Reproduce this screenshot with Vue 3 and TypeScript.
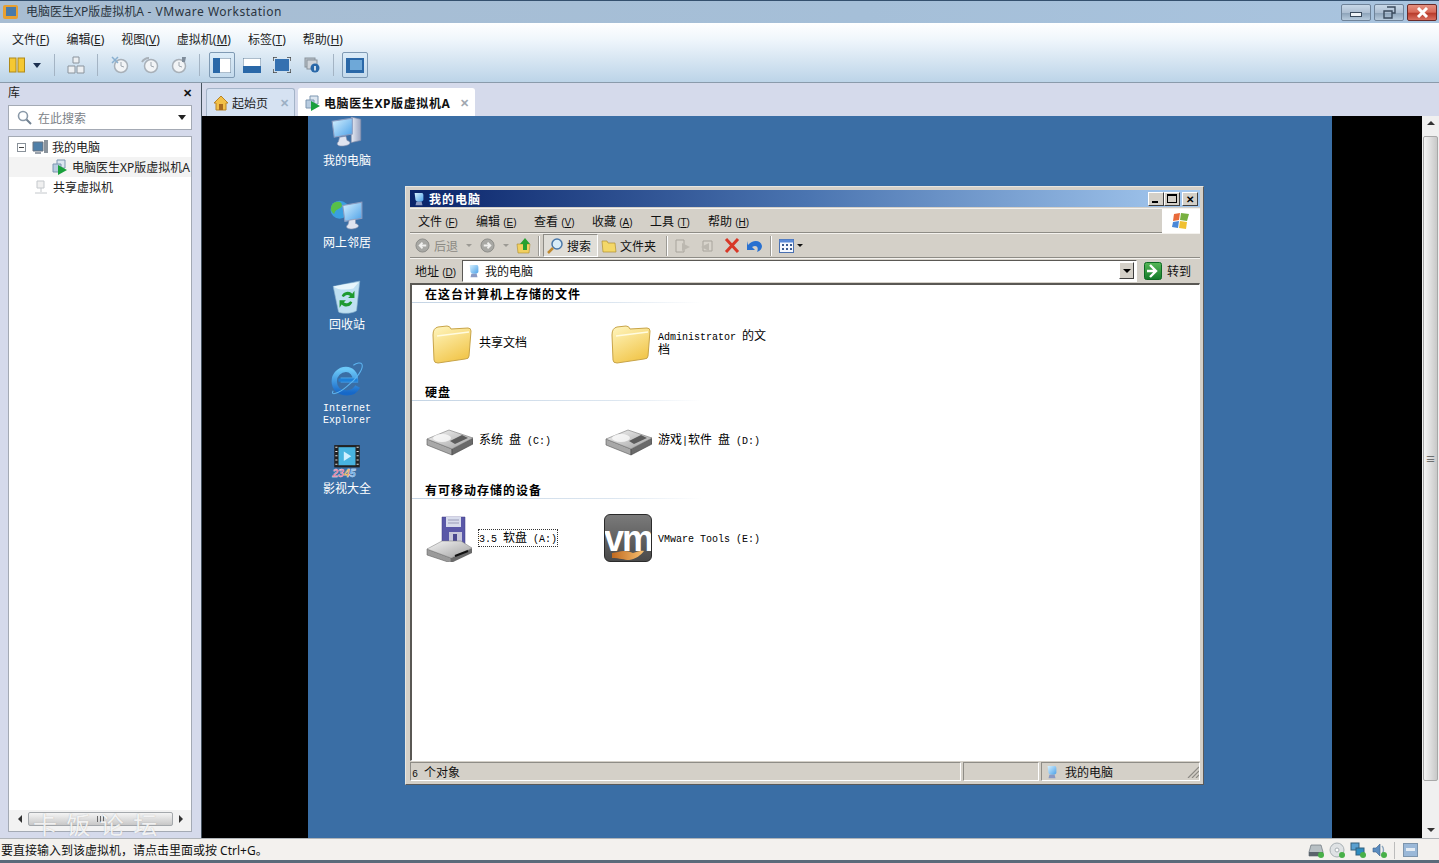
<template>
  <div class="app">
    <svg width="0" height="0" class="defs">
      <defs>
        <linearGradient id="gScreen" x1="0" y1="0" x2="1" y2="1"><stop offset="0" stop-color="#d8f2ff" /><stop offset="1" stop-color="#4aa0e8" /></linearGradient>
        <linearGradient id="gCase" x1="0" y1="0" x2="1" y2="0"><stop offset="0" stop-color="#e8ecf4" /><stop offset="1" stop-color="#9aa4c0" /></linearGradient>
        <linearGradient id="gFolder" x1="0" y1="0" x2="0.5" y2="1"><stop offset="0" stop-color="#fff6c0" /><stop offset="1" stop-color="#f2c850" /></linearGradient>
        <linearGradient id="gDisk" x1="0" y1="0" x2="1" y2="1"><stop offset="0" stop-color="#f4f4f4" /><stop offset="1" stop-color="#a0a0a0" /></linearGradient>
        <linearGradient id="gHand" x1="0" y1="0" x2="1" y2="0"><stop offset="0" stop-color="#c06a20" /><stop offset="1" stop-color="#f8c070" /></linearGradient>
        <linearGradient id="gGreen" x1="0" y1="0" x2="0" y2="1"><stop offset="0" stop-color="#58b858" /><stop offset="1" stop-color="#127a2a" /></linearGradient>
        <linearGradient id="gIe" x1="0" y1="0" x2="0" y2="1"><stop offset="0" stop-color="#6cc8f8" /><stop offset="1" stop-color="#1668c8" /></linearGradient>
      </defs>
      <symbol id="i-mypc" viewBox="0 0 32 32">
        <path d="M20 1 L29 3 V23 L20 25Z" fill="url(#gCase)" stroke="#7f8aa8" stroke-width=".6" />
        <path d="M2 5 L21 2 V17 L4 20Z" fill="url(#gScreen)" stroke="#8a9cc0" />
        <path d="M9 20 L15 19 L16 23 C20 24 20 27 14 28 C8 29 5 27 8 24Z" fill="#dfe4f0" stroke="#8a94b0" stroke-width=".6" />
      </symbol>
      <symbol id="i-net" viewBox="0 0 32 32">
        <circle cx="9" cy="11" r="8.5" fill="#3aa0e0" />
        <path d="M3 5 C8 2 12 4 11 8 C9 11 5 10 4 15 C0 13 0 8 3 5Z" fill="#58c048" />
        <path d="M12 7 L30 4 V19 L14 22Z" fill="url(#gScreen)" stroke="#8a9cc0" />
        <path d="M18 21 L24 20 L24 24 C28 25 28 28 22 29 C16 30 14 27 17 25Z" fill="#dfe4f0" stroke="#8a94b0" stroke-width=".6" />
      </symbol>
      <symbol id="i-bin" viewBox="0 0 32 32">
        <path d="M3 6 L28 1 L25 29 C20 32 11 32 8 30Z" fill="#bfe0f2" stroke="#88b0cc" stroke-width=".6" />
        <path d="M3 6 L14 4 L27 2 L22 8 C14 10 7 9 3 6Z" fill="#e8f6fc" />
        <path d="M11 15 A6 6 0 0 1 21 13 L23 10 L23 17 L17 17 L19 15 A4 4 0 0 0 13 16Z" fill="#1e9a30" />
        <path d="M21 21 A6 6 0 0 1 11 23 L9 26 L9 19 L15 19 L13 21 A4 4 0 0 0 19 20Z" fill="#1e9a30" />
      </symbol>
      <symbol id="i-ie" viewBox="0 0 32 32">
        <path d="M10 17 H24 C24 11 20 7 15 7 C9 7 4 12 4 18 C4 25 9 29 16 29 C20 29 24 27 26 23" fill="none" stroke="url(#gIe)" stroke-width="5" />
        <path d="M8 17 H26" stroke="#1f80d8" stroke-width="3" />
        <path d="M3 27 C0 32 8 30 16 23 C25 16 32 6 30 2 C29 0 25 1 22 3" fill="none" stroke="#5cb4f0" stroke-width="1" />
      </symbol>
      <symbol id="i-folder" viewBox="0 0 48 48">
        <path d="M8 17 Q8 10 13 9 L22 8 Q25 8 26 11 L43 10 Q46 10 46 13 L44 38 Q44 41 40 41 L13 45 Q9 45 9 42Z" fill="url(#gFolder)" stroke="#c8a448" />
        <path d="M12 18 L44 14" stroke="#fffbe0" stroke-width="1.5" />
      </symbol>
      <symbol id="i-hdd" viewBox="0 0 48 48">
        <path d="M2 23 L27 33 V39 L2 29Z" fill="#a8a8a8" stroke="#555" stroke-width=".6" />
        <path d="M27 33 L48 22 V28 L27 39Z" fill="#6a6a6a" stroke="#444" stroke-width=".6" />
        <path d="M2 23 L24 14 L48 22 L27 33Z" fill="url(#gDisk)" stroke="#777" stroke-width=".6" />
        <path d="M30 28 L43 22 L37 19 L25 25Z" fill="#5c5c5c" />
        <ellipse cx="17" cy="22" rx="9" ry="4" fill="#fff" opacity=".7" />
      </symbol>
      <symbol id="i-floppy" viewBox="0 0 48 48">
        <path d="M17 3 H40 V31 H17Z" fill="#5a58a8" stroke="#3c3a80" stroke-width=".5" />
        <path d="M21 3 H36 V13 H21Z" fill="#d8dcec" />
        <path d="M23 6 H34 M23 9 H34" stroke="#9a9cb8" />
        <path d="M24 18 H37 V31 H24Z" fill="#c8c8dc" />
        <path d="M28 20 H32 V31 H28Z" fill="#4a4890" />
        <path d="M2 35 L26 44 V49 L2 41Z" fill="#9a9a9a" stroke="#555" stroke-width=".5" />
        <path d="M26 44 L47 34 V39 L26 49Z" fill="#6a6a6a" />
        <path d="M2 35 L17 27 L36 27 L47 34 L26 44Z" fill="url(#gDisk)" stroke="#777" stroke-width=".5" />
        <path d="M30 42 L43 37" stroke="#111" stroke-width="2" />
      </symbol>
      <symbol id="i-uppc" viewBox="0 0 16 16">
        <path d="M3 1 H12 L13 3 V9 C12 12 5 12 4 9 Z" fill="url(#gScreen)" />
        <path d="M5 11 H11 L12 15 H4Z" fill="#8a9ac4" />
      </symbol>
      <symbol id="i-vm" viewBox="0 0 16 16">
        <path d="M5 1 H13 V9 H5Z" fill="#dce6f0" stroke="#7c96b0" />
        <path d="M1 5 H9 V13 H1Z" fill="#b8cce0" stroke="#7c96b0" />
        <path d="M6 6 L15 11 L6 16Z" fill="#19a03c" />
      </symbol>
      <symbol id="i-host" viewBox="0 0 16 16">
        <path d="M1 3 H11 V12 H1Z" fill="#4f7fa8" stroke="#6a7480" />
        <path d="M12 1 H16 V14 H12Z" fill="#8a939c" />
        <path d="M3 13 H9 V15 H3Z" fill="#9aa2ac" />
      </symbol>
      <symbol id="i-clock" viewBox="0 0 18 18">
        <circle cx="10" cy="10" r="6.5" fill="#f2f4f6" stroke="#a8b0b8" stroke-width="1.5" />
        <path d="M10 6 V10 L13 11" fill="none" stroke="#a0a8b0" />
      </symbol>
      <symbol id="i-gocircle" viewBox="0 0 16 16">
        <circle cx="8" cy="8" r="7" fill="#a8a8a4" stroke="#8c8c88" />
        <path d="M4 8 H11 M8 5 L11 8 L8 11" fill="none" stroke="#f0f0ee" stroke-width="2" />
      </symbol>
    </svg>

    <header class="titlebar">
      <svg class="app-icon" width="18" height="18" viewBox="0 0 18 18">
        <rect x="1" y="2" width="15" height="14" rx="2" fill="#e8a030" />
        <rect x="4" y="4" width="10" height="9" fill="#4a7aa8" />
      </svg>
      <span class="title-text">电脑医生XP版虚拟机A<span class="title-app"> - VMware Workstation</span></span>
      <div class="win-btns">
        <button class="wbtn"><i class="glyph-min"></i></button>
        <button class="wbtn">
          <svg width="13" height="13" viewBox="0 0 13 13"><path d="M4 1 H12 V7 H9 M1 5 H9 V12 H1Z" fill="none" stroke="#3a4a5c" stroke-width="1.4" /></svg>
        </button>
        <button class="wbtn close">
          <svg width="13" height="11" viewBox="0 0 13 11"><path d="M2 1 L11 10 M11 1 L2 10" stroke="#fff" stroke-width="3" /></svg>
        </button>
      </div>
    </header>

    <div class="ribbon">
      <nav class="menu">
        <span v-for="m in hostMenu" :key="m.k">{{ m.t }}(<u>{{ m.k }}</u>)</span>
      </nav>
      <div class="tools">
        <svg class="t-pause" width="16" height="16" viewBox="0 0 16 16">
          <rect x="0.5" y="1" width="6.5" height="14" fill="#f5c832" stroke="#b08a18" />
          <rect x="9" y="1" width="6.5" height="14" fill="#f5c832" stroke="#b08a18" />
        </svg>
        <i class="caret t-caret"></i>
        <i class="sep s1"></i>
        <svg class="t-net" width="18" height="18" viewBox="0 0 18 18">
          <path d="M6 1 H12 V7 H6Z M1 10 H8 V17 H1Z M10 10 H17 V17 H10Z" fill="#eceff2" stroke="#8a939c" />
        </svg>
        <i class="sep s2"></i>
        <svg class="t-c1" width="18" height="18"><use href="#i-clock" /><path d="M1 1 L7 7 M7 1 L1 7" stroke="#8ab0d0" stroke-width="1.5" /></svg>
        <svg class="t-c2" width="18" height="18"><use href="#i-clock" /><path d="M1 6 A8 8 0 0 1 8 2" fill="none" stroke="#a8b0b8" stroke-width="2" /></svg>
        <svg class="t-c3" width="18" height="18"><use href="#i-clock" /><path d="M13 1 L17 1 L16 6 L13 6Z" fill="#7f8c9a" /></svg>
        <i class="sep s3"></i>
        <button class="tbtn on t-b1">
          <svg width="18" height="15" viewBox="0 0 18 15"><rect width="18" height="15" fill="#fff" stroke="#5a7a98" /><rect width="7" height="15" fill="#2a68a8" /></svg>
        </button>
        <svg class="t-b2" width="18" height="15" viewBox="0 0 18 15"><rect width="18" height="15" fill="#fff" stroke="#5a7a98" /><rect y="8" width="18" height="7" fill="#2a68a8" /></svg>
        <svg class="t-b3" width="18" height="16" viewBox="0 0 18 16"><rect x="2" y="2" width="14" height="12" fill="#3470b0" /><path d="M0 4 V0 H4 M14 0 H18 V4 M18 12 V16 H14 M4 16 H0 V12" fill="none" stroke="#444" stroke-width="1.4" /></svg>
        <svg class="t-b4" width="16" height="16" viewBox="0 0 16 16"><rect x="1" y="1" width="10" height="9" fill="#b8c0c8" stroke="#8a939c" /><rect x="3" y="3" width="10" height="9" fill="#cfd4da" stroke="#8a939c" /><circle cx="11" cy="11" r="4.5" fill="#2a68a8" /><path d="M11 9 V13.5" stroke="#fff" stroke-width="1.5" /></svg>
        <i class="sep s4"></i>
        <button class="tbtn on t-b5">
          <svg width="18" height="15" viewBox="0 0 18 15"><rect width="18" height="15" fill="#2a68a8" /><rect x="4" y="2" width="12" height="10" fill="#6ea8d8" /></svg>
        </button>
      </div>
    </div>

    <main class="body">
      <aside class="library">
        <div class="lib-head"><span>库</span><b>✕</b></div>
        <div class="lib-search">
          <svg width="15" height="15" viewBox="0 0 15 15"><circle cx="6" cy="6" r="4.5" fill="none" stroke="#8a99a8" stroke-width="1.6" /><path d="M9.5 9.5 L14 14" stroke="#708090" stroke-width="2" /></svg>
          <span>在此搜索</span>
          <i class="caret"></i>
        </div>
        <div class="tree">
          <div class="tree-list">
            <div class="tree-row">
              <i class="minus"></i>
              <svg width="16" height="16"><use href="#i-host" /></svg>
              <span>我的电脑</span>
            </div>
            <div class="tree-row sel">
              <svg width="16" height="16"><use href="#i-vm" /></svg>
              <span>电脑医生XP版虚拟机A</span>
            </div>
            <div class="tree-row third">
              <svg width="16" height="16" viewBox="0 0 16 16"><path d="M4 2 H11 V9 H4Z M8 9 V13 M2 14 H14" fill="#f0f0f0" stroke="#c4c8cc" /></svg>
              <span>共享虚拟机</span>
            </div>
          </div>
          <div class="hbar">
            <i class="ar-l"></i>
            <div class="hthumb"></div>
            <i class="ar-r"></i>
          </div>
        </div>
      </aside>

      <section class="workspace">
        <div class="tabs">
          <div class="tab">
            <svg width="16" height="16" viewBox="0 0 16 16"><path d="M1 8 L8 1 L15 8 L13 8 V15 H3 V8Z" fill="#f2c048" stroke="#b88428" /><rect x="6" y="9" width="4" height="6" fill="#a86a20" /></svg>
            <span>起始页</span>
            <b>✕</b>
          </div>
          <div class="tab active">
            <svg width="16" height="16"><use href="#i-vm" /></svg>
            <span>电脑医生XP版虚拟机A</span>
            <b>✕</b>
          </div>
        </div>
        <div class="stage">
          <div class="letterbox">
            <div class="desktop">
              <div
                v-for="d in desktopIcons"
                :key="d.label"
                class="desk-icon"
                :style="{ top: d.top + 'px' }"
              >
                <svg v-if="d.icon" width="34" height="34"><use :href="d.icon" /></svg>
                <svg v-else width="34" height="34" viewBox="0 0 32 32">
                  <rect x="4" y="1" width="24" height="21" fill="#222" />
                  <rect x="8" y="3" width="16" height="17" fill="#48b4e0" />
                  <path d="M13 7 L20 11.5 L13 16Z" fill="#d0f0ff" />
                  <path d="M5 3 H7 M5 7 H7 M5 11 H7 M5 15 H7 M5 19 H7 M25 3 H27 M25 7 H27 M25 11 H27 M25 15 H27 M25 19 H27" stroke="#ddd" />
                  <text x="2" y="31" class="logo2345"><tspan fill="#e86a90">23</tspan><tspan fill="#e8a040">4</tspan><tspan fill="#60a8e8">5</tspan></text>
                </svg>
                <span class="guest desk-label">
                  <span v-for="(l, i) in d.label.split('|')" :key="i" class="line">
                    <span v-for="(r, j) in runs(l)" :key="j" :class="{ lat: r.lat }">{{ r.t }}</span>
                  </span>
                </span>
              </div>

              <div class="xp">
                <div class="xp-title">
                  <svg width="14" height="16"><use href="#i-uppc" /></svg>
                  <span>我的电脑</span>
                  <div class="xp-caps">
                    <i class="cap"><em class="c-min"></em></i>
                    <i class="cap"><em class="c-max"></em></i>
                    <i class="cap c-close">✕</i>
                  </div>
                </div>

                <div class="xp-menu">
                  <span v-for="m in guestMenu" :key="m.k" class="xp-mi">{{ m.t }} <small>(<u>{{ m.k }}</u>)</small></span>
                  <div class="xp-brand">
                    <svg width="20" height="18" viewBox="0 0 20 18">
                      <path d="M3 2 L9 1 L8 8 L2 9Z" fill="#e86a3a" />
                      <path d="M10 1 L18 2 L16 9 L9 8Z" fill="#78b040" />
                      <path d="M2 10 L8 9 L7 16 L1 15Z" fill="#4a88d8" />
                      <path d="M9 9 L16 10 L15 17 L8 16Z" fill="#f0c030" />
                    </svg>
                  </div>
                </div>

                <div class="xp-tools">
                  <svg class="x-back" width="15" height="15"><g transform="matrix(-1 0 0 1 15 0)"><use href="#i-gocircle" width="15" height="15" /></g></svg>
                  <span class="x-muted">后退</span>
                  <i class="x-tri tri-a"></i>
                  <svg class="x-fwd" width="15" height="15"><use href="#i-gocircle" width="15" height="15" /></svg>
                  <i class="x-tri tri-b"></i>
                  <svg class="x-up" width="16" height="17" viewBox="0 0 16 17">
                    <path d="M1 7 H14 L13 16 H2Z" fill="#f2d060" stroke="#a88a30" stroke-width=".6" />
                    <path d="M9 1 L14 7 H11 V13 H7 V7 H4Z" fill="#28a030" />
                  </svg>
                  <i class="x-sep sep-a"></i>
                  <div class="x-search">
                    <svg width="18" height="18" viewBox="0 0 18 18"><circle cx="11" cy="7" r="5" fill="#d8ecf8" stroke="#4a78a8" stroke-width="1.5" /><path d="M7 11 L2 16" stroke="#c08a30" stroke-width="2.5" /></svg>
                    <span>搜索</span>
                  </div>
                  <div class="x-folders">
                    <svg width="16" height="15" viewBox="0 0 16 15"><path d="M1 3 H6 L7 5 H14 L15 14 H2Z" fill="#f4d868" stroke="#b09030" stroke-width=".7" /></svg>
                    <span>文件夹</span>
                  </div>
                  <i class="x-sep sep-b"></i>
                  <svg class="x-i1" width="16" height="16" viewBox="0 0 16 16"><path d="M1 2 H9 V14 H1Z" fill="#d8d4cc" stroke="#a8a49c" /><path d="M7 5 L15 9 L7 13Z" fill="#bcb8b0" /></svg>
                  <svg class="x-i2" width="16" height="16" viewBox="0 0 16 16"><path d="M4 3 H13 V13 H4Z" fill="#d8d4cc" stroke="#a8a49c" /><path d="M10 5 L2 9 L10 13Z" fill="#bcb8b0" /></svg>
                  <svg class="x-i3" width="16" height="15" viewBox="0 0 16 15"><path d="M2 1 L14 14 M14 1 L2 14" stroke="#d83828" stroke-width="3" /></svg>
                  <svg class="x-i4" width="18" height="15" viewBox="0 0 18 15"><path d="M2 7 C7 1 15 2 16 8 C16 11 14 13 11 14 C13 10 11 6 6 9 L9 12 H1 V3Z" fill="#2870d0" /></svg>
                  <i class="x-sep sep-c"></i>
                  <svg class="x-i5" width="15" height="14" viewBox="0 0 15 14"><rect x=".5" y=".5" width="14" height="13" fill="#f4f8ff" stroke="#4a70b0" /><rect x=".5" y=".5" width="14" height="3" fill="#5a8ad8" /><path d="M3 6 H5 M7 6 H9 M11 6 H13 M3 10 H5 M7 10 H9 M11 10 H13" stroke="#3a5a90" stroke-width="2" /></svg>
                  <i class="x-tri tri-c"></i>
                </div>

                <div class="xp-addr">
                  <span class="addr-label">地址 <small>(<u>D</u>)</small></span>
                  <div class="addr-box">
                    <svg width="14" height="16"><use href="#i-uppc" /></svg>
                    <span>我的电脑</span>
                    <i class="addr-drop"></i>
                  </div>
                  <svg width="18" height="18" viewBox="0 0 18 18" class="addr-go"><rect x=".5" y=".5" width="17" height="17" rx="2" fill="url(#gGreen)" stroke="#0e6a24" /><path d="M6 3 L12 9 L6 15 M3 9 H11" fill="none" stroke="#fff" stroke-width="2.4" /></svg>
                  <span class="addr-text">转到</span>
                </div>

                <div class="xp-content">
                  <div v-for="s in sections" :key="s.title" class="xp-section">
                    <h3>{{ s.title }}</h3>
                    <i class="rule"></i>
                    <div class="xp-tiles">
                      <div v-for="t in s.items" :key="t.label" class="xp-tile">
                        <div class="xp-ico">
                          <svg v-if="t.icon" width="48" height="48"><use :href="t.icon" /></svg>
                          <div v-else class="vm-logo">
                            <span>vm</span>
                            <svg width="34" height="14" viewBox="0 0 34 14"><path d="M1 6 L7 5 C12 3 18 4 22 6 C26 5 30 3 33 4 C30 8 25 12 18 13 C13 13 9 11 1 11Z" fill="url(#gHand)" /></svg>
                          </div>
                        </div>
                        <span class="guest xp-label" :class="{ focus: t.focus }">
                          <span v-for="(r, j) in runs(t.label)" :key="j" :class="{ lat: r.lat }">{{ r.t }}</span>
                        </span>
                      </div>
                    </div>
                  </div>
                </div>

                <div class="xp-status">
                  <div class="st st-a guest"><span class="lat">6 </span>个对象</div>
                  <div class="st st-b"></div>
                  <div class="st st-c guest">
                    <svg width="14" height="16"><use href="#i-uppc" /></svg>
                    <span>我的电脑</span>
                    <svg class="grip" width="12" height="12" viewBox="0 0 12 12"><path d="M12 1 L1 12 M12 5 L5 12 M12 9 L9 12" stroke="#8c8a84" stroke-width="1.2" /></svg>
                  </div>
                </div>
              </div>
            </div>
          </div>
          <div class="vbar">
            <i class="ar-u"></i>
            <div class="vthumb"><span>≡</span></div>
            <i class="ar-d"></i>
          </div>
        </div>
      </section>
    </main>

    <footer class="statusbar">
      <span>要直接输入到该虚拟机，请点击里面或按 Ctrl+G。</span>
      <div class="devices">
        <svg width="16" height="16" viewBox="0 0 16 16"><path d="M3 3 H13 L15 10 V14 H1 V10Z" fill="#b8c0c4" stroke="#6a747c" stroke-width=".7" /><rect x="1" y="10" width="14" height="4" fill="#5a646c" /><circle cx="13" cy="13" r="3" fill="#48b048" /></svg>
        <svg width="16" height="16" viewBox="0 0 16 16"><circle cx="8" cy="8" r="7" fill="#dfe2e4" stroke="#a8b0b4" /><circle cx="8" cy="8" r="2" fill="#fff" stroke="#a8b0b4" /><circle cx="13" cy="13" r="3" fill="#48b048" /></svg>
        <svg width="16" height="16" viewBox="0 0 16 16"><rect x="1" y="1" width="8" height="7" fill="#5aa0d0" stroke="#34607c" /><rect x="6" y="6" width="8" height="7" fill="#2e8cc0" stroke="#34607c" /><circle cx="13" cy="13" r="3" fill="#48b048" /></svg>
        <svg width="16" height="16" viewBox="0 0 16 16"><path d="M2 6 H5 L9 2 V14 L5 10 H2Z" fill="#5a8cc0" stroke="#3a6088" stroke-width=".6" /><path d="M11 4 C13 6 13 10 11 12" fill="none" stroke="#8aa4bc" stroke-width="1.4" /><circle cx="13" cy="13" r="3" fill="#48b048" /></svg>
        <i class="dv-sep"></i>
        <svg width="15" height="14" viewBox="0 0 15 14"><rect x=".5" y=".5" width="14" height="13" fill="#9ab8d8" stroke="#7c94ac" /><rect x="3" y="5" width="9" height="3" fill="#e4ecf4" /></svg>
      </div>
    </footer>
    <div class="bottom-edge"></div>
    <div class="watermark">卡 饭 论 坛</div>
  </div>
</template>

<script setup lang="ts">
interface MenuItem {
  t: string
  k: string
}

interface Tile {
  label: string
  icon?: string
  focus?: boolean
}

interface Section {
  title: string
  items: Tile[]
}

const hostMenu: MenuItem[] = [
  { t: '文件', k: 'F' },
  { t: '编辑', k: 'E' },
  { t: '视图', k: 'V' },
  { t: '虚拟机', k: 'M' },
  { t: '标签', k: 'T' },
  { t: '帮助', k: 'H' }
]

const guestMenu: MenuItem[] = [
  { t: '文件', k: 'F' },
  { t: '编辑', k: 'E' },
  { t: '查看', k: 'V' },
  { t: '收藏', k: 'A' },
  { t: '工具', k: 'T' },
  { t: '帮助', k: 'H' }
]

// top is the place on the guest desktop
const desktopIcons = [
  { label: '我的电脑', icon: '#i-mypc', top: 0 },
  { label: '网上邻居', icon: '#i-net', top: 82 },
  { label: '回收站', icon: '#i-bin', top: 164 },
  { label: 'Internet|Explorer', icon: '#i-ie', top: 246 },
  { label: '影视大全', icon: '', top: 328 }
]

const sections: Section[] = [
  {
    title: '在这台计算机上存储的文件',
    items: [
      { label: '共享文档', icon: '#i-folder' },
      { label: 'Administrator 的文档', icon: '#i-folder' }
    ]
  },
  {
    title: '硬盘',
    items: [
      { label: '系统 盘 (C:)', icon: '#i-hdd' },
      { label: '游戏|软件 盘 (D:)', icon: '#i-hdd' }
    ]
  },
  {
    title: '有可移动存储的设备',
    items: [
      { label: '3.5 软盘 (A:)', icon: '#i-floppy', focus: true },
      { label: 'VMware Tools (E:)' }
    ]
  }
]

// the guest font is half width for latin, so latin and CJK need different sizes
const runs = (text: string) => {
  const parts = text.match(/[\u4e00-\u9fff]|[^\u4e00-\u9fff]+/g) || []
  return parts.map((t) => ({ t, lat: !/[\u4e00-\u9fff]/.test(t) }))
}
</script>

<style>
html, body { margin: 0; padding: 0; overflow: hidden; background: #d5daeb; }
</style>

<style scoped>
.app {
  position: relative;
  width: 1439px;
  height: 863px;
  display: flex;
  flex-direction: column;
  overflow: hidden;
  font: 12px "Noto Sans", "Noto Sans CJK SC", sans-serif;
  color: #222;
}
.defs { position: absolute; }
i, em { display: block; font-style: normal; }
button { padding: 0; border: 0; background: none; }

.titlebar {
  height: 23px;
  flex: none;
  display: flex;
  align-items: center;
  box-sizing: border-box;
  border-top: 1px solid #34506e;
  background: linear-gradient(to right, #a8bdd2, #a5bfd8 60%, #a9c4df);
}
.app-icon { margin: 0 6px 0 2px; }
.title-text { font-size: 12px; color: #2a3540; line-height: 20px; }
.title-app { letter-spacing: .5px; }
.win-btns { margin-left: auto; margin-right: 2px; display: flex; gap: 3px; height: 17px; margin-top: 1px; }
.wbtn {
  width: 30px;
  height: 17px;
  box-sizing: border-box;
  display: flex;
  align-items: center;
  justify-content: center;
  border: 1px solid #6f8399;
  border-radius: 2px;
  background: linear-gradient(to bottom, #c8d8e8 0%, #aebfd2 50%, #8ea4ba 55%, #b8cbdd 100%);
}
.wbtn.close {
  border-color: #6a2a28;
  background: linear-gradient(to bottom, #e49080 0%, #d86a58 48%, #b83c2c 55%, #d87060 100%);
}
.glyph-min { width: 10px; height: 3px; border: 1px solid #3a4a5c; background: #f0f4f8; margin-top: 3px; }

.ribbon {
  height: 60px;
  flex: none;
  box-sizing: border-box;
  border-bottom: 1px solid #8a9bab;
  background: linear-gradient(to bottom, #ffffff 0%, #eef5fb 30%, #bcd4e8 100%);
}
.menu { height: 28px; box-sizing: border-box; padding: 4px 0 0 12px; display: flex; align-items: center; gap: 17px; font-size: 12px; color: #222; }
.tools { height: 28px; display: flex; align-items: center; }
.t-pause { margin-left: 9px; }
.caret { width: 0; height: 0; border: 4px solid transparent; border-top: 5px solid #1c3050; border-bottom: 0; }
.t-caret { margin-left: 8px; }
.sep { width: 1px; height: 22px; background: #a4b4c4; }
.s1 { margin-left: 13px; }
.t-net { margin-left: 12px; }
.s2 { margin-left: 12px; }
.t-c1 { margin-left: 13px; }
.t-c2 { margin-left: 12px; }
.t-c3 { margin-left: 10px; }
.s3 { margin-left: 12px; }
.tbtn {
  width: 26px;
  height: 26px;
  display: flex;
  align-items: center;
  justify-content: center;
  box-sizing: border-box;
  border: 1px solid #7f9ab4;
  border-radius: 2px;
  background: linear-gradient(to bottom, #dcecf8, #c4daec);
}
.t-b1 { margin-left: 9px; }
.t-b2 { margin-left: 8px; }
.t-b3 { margin-left: 12px; }
.t-b4 { margin-left: 13px; }
.s4 { margin-left: 13px; }
.t-b5 { margin-left: 8px; }

.body { flex: 1; min-height: 0; display: flex; background: #d5daeb; }
.library { width: 201px; flex: none; box-sizing: border-box; padding: 0 9px 6px 8px; display: flex; flex-direction: column; }
.lib-head { height: 22px; box-sizing: border-box; padding-bottom: 4px; display: flex; align-items: center; justify-content: space-between; }
.lib-head span { font-size: 12px; }
.lib-head b { font-size: 11px; color: #111; }
.lib-search {
  height: 25px;
  box-sizing: border-box;
  display: flex;
  align-items: center;
  gap: 6px;
  padding: 0 5px 0 8px;
  border: 1px solid #a4aab4;
  background: #fff;
  color: #7c8288;
}
.lib-search .caret { margin-left: auto; border-top-color: #222; }
.tree {
  flex: 1;
  min-height: 0;
  margin-top: 6px;
  display: flex;
  flex-direction: column;
  border: 1px solid #a4aab4;
  background: #fff;
}
.tree-list { flex: 1; overflow: hidden; }
.tree-row { height: 20px; display: flex; align-items: center; gap: 4px; white-space: nowrap; font-size: 12px; padding-left: 8px; }
.minus { width: 9px; height: 9px; box-sizing: border-box; border: 1px solid #8a929a; position: relative; margin-right: 2px; }
.minus::after { content: ""; position: absolute; left: 1px; right: 1px; top: 3px; height: 1px; background: #444; }
.tree-row.sel { padding-left: 43px; background: #f3f3f3; }
.tree-row.third { padding-left: 24px; }
.hbar { height: 18px; padding: 0 8px 3px 9px; display: flex; align-items: center; gap: 6px; background: #f2f2f2; }
.hthumb {
  flex: 1;
  height: 14px;
  box-sizing: border-box;
  border: 1px solid #a4a8ac;
  border-radius: 2px;
  background: linear-gradient(to bottom, #f4f4f4, #c8c8c8);
  display: flex;
  align-items: center;
  justify-content: center;
}
.hthumb::after {
  content: "";
  width: 7px;
  height: 6px;
  background: repeating-linear-gradient(to right, #666 0 1px, transparent 1px 3px);
}
.ar-l { width: 0; border: 4px solid transparent; border-right: 4px solid #333; border-left: 0; }
.ar-r { width: 0; border: 4px solid transparent; border-left: 4px solid #333; border-right: 0; }

.workspace {
  flex: 1;
  min-width: 0;
  display: flex;
  flex-direction: column;
  border-left: 1px solid #46535f;
}
.tabs { height: 33px; flex: none; display: flex; align-items: flex-end; gap: 3px; padding-left: 4px; }
.tab {
  width: 89px;
  height: 28px;
  box-sizing: border-box;
  display: flex;
  align-items: center;
  gap: 3px;
  padding-left: 6px;
  border: 1px solid #a4b4c8;
  border-bottom: 0;
  border-radius: 3px 3px 0 0;
  background: #d6e2f2;
}
.tab b { margin-left: 9px; font-size: 11px; color: #9cb0c4; }
.tab.active { width: 177px; background: #fff; border-color: #fff; font-weight: 700; color: #111; letter-spacing: .6px; }
.tab.active b { margin-left: 7px; color: #a0a8b0; font-weight: 700; }

.stage { flex: 1; min-height: 0; display: flex; }
.letterbox { flex: 1; min-width: 0; background: #000; padding: 0 90px 0 106px; display: flex; }
.desktop { position: relative; flex: 1; background: #3a6ea5; overflow: hidden; }
.vbar {
  width: 17px;
  flex: none;
  box-sizing: border-box;
  display: flex;
  flex-direction: column;
  align-items: center;
  padding: 5px 0 6px;
  background: #f0f0f0;
}
.vthumb {
  flex: 1;
  width: 15px;
  margin: 11px 0 47px;
  box-sizing: border-box;
  border: 1px solid #a8a8a8;
  border-radius: 2px;
  background: linear-gradient(to right, #f4f4f4, #c8c8c8);
  display: flex;
  align-items: center;
  justify-content: center;
  color: #555;
  font-size: 10px;
}
.ar-u { width: 0; border: 4px solid transparent; border-bottom: 4px solid #333; border-top: 0; }
.ar-d { width: 0; border: 4px solid transparent; border-top: 4px solid #333; border-bottom: 0; }

.guest { font-family: "Noto Sans CJK SC", sans-serif; font-size: 12px; }
.lat { font-family: "Liberation Mono", monospace; font-size: 10px; white-space: pre; }
.desk-icon {
  position: absolute;
  left: 0;
  width: 78px;
  display: flex;
  flex-direction: column;
  align-items: center;
  gap: 4px;
  color: #fff;
  line-height: 12px;
  text-align: center;
}
.desk-label .line { display: block; height: 12px; }
.logo2345 { font: italic 700 10px "Liberation Sans", sans-serif; stroke: #fff; stroke-width: .25px; }

.xp {
  position: absolute;
  left: 97px;
  top: 70px;
  width: 799px;
  height: 599px;
  box-sizing: border-box;
  padding: 3px 3px 2px 4px;
  display: flex;
  flex-direction: column;
  background: #d4d0c8;
  border: 1px solid #e8e6e0;
  border-right-color: #5a5a5a;
  border-bottom-color: #5a5a5a;
}
.xp-title {
  height: 17px;
  flex: none;
  display: flex;
  align-items: center;
  gap: 3px;
  padding-left: 2px;
  color: #fff;
  font-weight: 700;
  letter-spacing: 1px;
  background: linear-gradient(to right, #0a246a, #4a74b0 50%, #a6caf0);
}
.xp-caps { margin-left: auto; display: flex; margin-right: 2px; }
.cap {
  width: 16px;
  height: 14px;
  box-sizing: border-box;
  background: #d4d0c8;
  border: 1px solid;
  border-color: #fff #404040 #404040 #fff;
  position: relative;
  color: #000;
  font-size: 10px;
  line-height: 12px;
  text-align: center;
  font-weight: 700;
  letter-spacing: 0;
}
.c-close { margin-left: 2px; }
.c-min { position: absolute; left: 3px; bottom: 2px; width: 6px; height: 2px; background: #000; }
.c-max { position: absolute; left: 2px; top: 1px; width: 10px; height: 9px; box-sizing: border-box; border: 1px solid #000; border-top-width: 2px; }

.xp-menu {
  height: 25px;
  flex: none;
  margin-top: 1px;
  display: flex;
  align-items: center;
  padding-left: 8px;
  border-top: 1px solid #f4f2ee;
  border-bottom: 1px solid #8e8c86;
  box-sizing: border-box;
  color: #111;
}
.xp-mi { width: 58px; flex: none; white-space: nowrap; }
.xp-mi small, .addr-label small { font: 10px "Liberation Sans", sans-serif; }
.xp-brand {
  margin-left: auto;
  width: 38px;
  height: 24px;
  background: #fff;
  display: flex;
  align-items: center;
  justify-content: center;
}
.xp-tools {
  height: 25px;
  flex: none;
  display: flex;
  align-items: center;
  border-top: 1px solid #f4f2ee;
  border-bottom: 1px solid #8e8c86;
  box-sizing: border-box;
  color: #111;
}
.x-back { margin-left: 5px; }
.x-muted { margin-left: 4px; color: #8c8a84; }
.x-tri { width: 0; border: 3px solid transparent; border-top: 3px solid #6c6a66; border-bottom: 0; }
.tri-a { margin-left: 8px; border-top-color: #9c9a94; }
.x-fwd { margin-left: 8px; }
.tri-b { margin-left: 8px; border-top-color: #9c9a94; }
.x-up { margin-left: 7px; }
.x-sep { width: 0; height: 20px; border-left: 1px solid #9c9a94; border-right: 1px solid #fff; }
.sep-a { margin-left: 6px; }
.x-search {
  margin-left: 3px;
  width: 55px;
  height: 23px;
  box-sizing: border-box;
  display: flex;
  align-items: center;
  gap: 3px;
  padding-left: 2px;
  background: #e0ded8;
  border: 1px solid;
  border-color: #8e8c86 #fff #fff #8e8c86;
}
.x-folders { margin-left: 3px; display: flex; align-items: center; gap: 3px; }
.sep-b { margin-left: 10px; }
.x-i1 { margin-left: 7px; }
.x-i2 { margin-left: 8px; }
.x-i3 { margin-left: 9px; }
.x-i4 { margin-left: 6px; }
.sep-c { margin-left: 6px; }
.x-i5 { margin-left: 7px; }
.tri-c { margin-left: 3px; border-top-color: #111; }

.xp-addr { height: 25px; flex: none; display: flex; align-items: center; border-top: 1px solid #f4f2ee; box-sizing: border-box; padding: 0 0 1px 5px; color: #111; }
.addr-label { width: 47px; flex: none; white-space: nowrap; }
.addr-box {
  width: 675px;
  height: 22px;
  flex: none;
  box-sizing: border-box;
  display: flex;
  align-items: center;
  gap: 4px;
  padding: 0 2px 0 4px;
  background: #fff;
  border: 1px solid;
  border-color: #5a5854 #fff #fff #5a5854;
}
.addr-drop {
  margin-left: auto;
  width: 15px;
  height: 17px;
  box-sizing: border-box;
  background: #d4d0c8;
  border: 1px solid;
  border-color: #fff #404040 #404040 #fff;
  position: relative;
}
.addr-drop::after {
  content: "";
  position: absolute;
  left: 3px;
  top: 6px;
  border: 4px solid transparent;
  border-top: 4px solid #000;
  border-bottom: 0;
}
.addr-go { margin-left: 7px; }
.addr-text { margin-left: 5px; }

.xp-content {
  flex: 1;
  min-height: 0;
  padding-top: 1px;
  background: #fff;
  border: 1px solid;
  border-color: #5a5854 #fff #fff #5a5854;
  border-left-width: 2px;
  border-top-width: 2px;
  overflow: hidden;
}
.xp-section { height: 98px; }
.xp-section h3 { margin: 0; height: 16px; padding-left: 13px; font-size: 12px; line-height: 16px; font-weight: 700; letter-spacing: 1px; color: #000; font-family: "Noto Sans CJK SC", sans-serif; }
.rule { height: 1px; width: 290px; background: linear-gradient(to right, #c4d4e4, #dce6f0 70%, #fff); }
.xp-tiles { display: flex; padding: 15px 0 0 13px; }
.xp-tile { width: 179px; height: 48px; display: flex; align-items: center; gap: 6px; color: #000; }
.xp-ico { width: 48px; height: 48px; flex: none; }
.xp-label { line-height: 11px; width: 112px; margin-top: -1px; }
.xp-label.focus { width: auto; outline: 1px dotted #333; padding: 1px 0; }
.vm-logo {
  position: relative;
  width: 48px;
  height: 48px;
  box-sizing: border-box;
  border: 1px solid #2a2a2a;
  border-radius: 6px;
  background: linear-gradient(to bottom, #7a7a7a, #4a4a4a);
  overflow: hidden;
}
.vm-logo span {
  position: absolute;
  left: -2px;
  right: -2px;
  top: 4px;
  text-align: center;
  color: #fff;
  font: 700 36px/40px "Liberation Sans", sans-serif;
  letter-spacing: -2px;
}
.vm-logo svg { position: absolute; left: 6px; top: 32px; }

.xp-status { height: 20px; flex: none; display: flex; gap: 2px; margin-top: 1px; color: #111; }
.st { height: 19px; box-sizing: border-box; border-top: 1px solid #8e8c86; border-left: 1px solid #8e8c86; border-right: 1px solid #fff; border-bottom: 1px solid #fff; }
.st-a { width: 551px; padding-left: 1px; line-height: 17px; }
.st-b { width: 76px; }
.st-c { flex: 1; display: flex; align-items: center; gap: 6px; padding-left: 3px; }
.grip { margin-left: auto; }

.statusbar {
  height: 22px;
  flex: none;
  display: flex;
  align-items: center;
  padding: 1px 0 0 1px;
  background: #f3f1ee;
  border-top: 1px solid #b0b4b8;
  box-sizing: border-box;
  color: #111;
  font-size: 12px;
}
.devices { margin-left: auto; margin-right: 21px; display: flex; align-items: center; gap: 5px; }
.dv-sep { width: 1px; height: 17px; background: #bcbcbc; margin: 0 3px 0 2px; }
.bottom-edge { height: 3px; flex: none; background: #5a6a7a; }
.watermark {
  position: absolute;
  left: 33px;
  top: 806px;
  font: 400 24px "Noto Sans CJK SC", sans-serif;
  letter-spacing: 2px;
  white-space: nowrap;
  color: rgba(255, 255, 255, 0.85);
  text-shadow: 0 0 1px rgba(120, 120, 120, 0.5);
  pointer-events: none;
}
</style>
